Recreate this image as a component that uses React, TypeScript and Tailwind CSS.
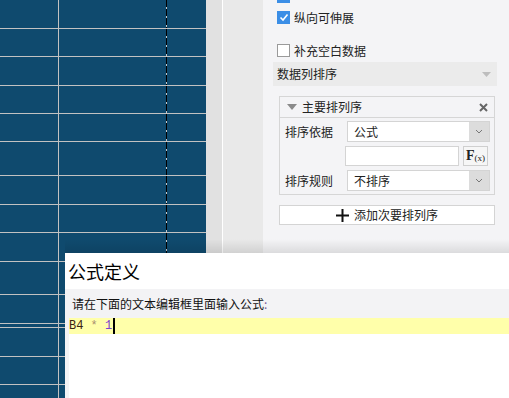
import React from 'react';

// grid row heights, each includes its 1px bottom line
const rowHeights = [29, 28, 29, 28, 28, 34, 29, 28, 29, 33, 29, 4, 29, 28, 28];

const cjk = { fontFamily: '"Noto Sans CJK SC", "Noto Sans", sans-serif' };

function Chevron() {
  return (
    <svg width="8" height="5" viewBox="0 0 8 5" fill="none">
      <path d="M1 1l3 3 3-3" stroke="#777" strokeWidth="1" />
    </svg>
  );
}

function Select({ value }: { value: string }) {
  return (
    <div className="flex h-[21px] w-[143px] border border-[#d4d4d4] bg-white">
      <div className="flex flex-1 items-center pl-[6px] text-[12px] leading-none text-[#222]">{value}</div>
      <div className="flex w-[20px] items-center justify-center bg-[#dcdcdc]">
        <Chevron />
      </div>
    </div>
  );
}

export default function App() {
  return (
    <div className="relative flex h-[398px] w-[509px] overflow-hidden bg-[#f4f4f6]" style={cjk}>
      {/* --- spreadsheet grid --- */}
      <div className="flex w-[206px] shrink-0 flex-col bg-[#0f4a6e]">
        {rowHeights.map((h, i) => (
          <div key={i} className="flex shrink-0 border-b border-[#c2c2c2] box-border" style={{ height: h }}>
            <div className="w-[58px]" />
            <div className="w-px bg-[#c2c2c2]" />
            <div className="w-[107px]" />
            <div className="w-px bg-[repeating-linear-gradient(to_bottom,#000_0px,#000_7px,#c8c8c8_7px,#c8c8c8_9px)]" />
            <div className="flex-1" />
          </div>
        ))}
      </div>
      <div className="w-[16px] shrink-0 bg-[#e1e1e1]" />
      <div className="w-px shrink-0 bg-white" />
      <div className="w-[40px] shrink-0 bg-[#e9e9e9]" />

      {/* --- property panel --- */}
      <div className="flex w-[246px] shrink-0 flex-col">
        <div className="h-[3px] pl-[14px]">
          <div className="h-[3px] w-[13px] bg-[#3b8ee6]" />
        </div>

        <div className="mt-[8px] flex h-[13px] items-center pl-[14px]">
          <div className="flex h-[13px] w-[13px] items-center justify-center bg-[#3b8ee6]">
            <svg width="10" height="9" viewBox="0 0 10 9" fill="none">
              <path d="M1.5 4.5l2.5 2.5 4.5-5.5" stroke="#fff" strokeWidth="1.6" />
            </svg>
          </div>
          <span className="ml-[4px] text-[12px] leading-none text-[#222]">纵向可伸展</span>
        </div>

        <div className="mt-[20px] flex h-[13px] items-center pl-[14px]">
          <div className="h-[13px] w-[13px] border border-[#9a9a9a] bg-white" />
          <span className="ml-[4px] text-[12px] leading-none text-[#222]">补充空白数据</span>
        </div>

        <div className="mt-[5px] ml-[10px] mr-[12px] flex h-[24px] items-center justify-between bg-[#ebebeb] pl-[4px] pr-[6px]">
          <span className="text-[12px] leading-none text-[#222]">数据列排序</span>
          <svg width="9" height="5" viewBox="0 0 9 5">
            <path d="M0 0h9L4.5 5z" fill="#bdbdbd" />
          </svg>
        </div>

        <div className="mt-[10px] ml-[16px] mr-[14px] flex flex-col border border-[#d6d6d6] pb-[3px]">
          <div className="flex h-[21px] items-center border-b border-[#d6d6d6] pl-[7px] pr-[6px]">
            <svg width="10" height="6" viewBox="0 0 10 6">
              <path d="M0 0h10L5 6z" fill="#8a8a8a" />
            </svg>
            <span className="ml-[5px] flex-1 text-[12px] leading-none text-[#222]">主要排列序</span>
            <svg width="9" height="9" viewBox="0 0 9 9">
              <path d="M1 1l7 7M8 1l-7 7" stroke="#666" strokeWidth="2" />
            </svg>
          </div>

          <div className="mt-[3px] flex items-center">
            <span className="w-[67px] pl-[5px] text-[12px] leading-none text-[#222]">排序依据</span>
            <Select value="公式" />
          </div>

          <div className="mt-[4px] flex items-center pl-[65px]">
            <div className="h-[20px] w-[114px] border border-[#d4d4d4] bg-white" />
            <div className="ml-[4px] flex h-[20px] w-[25px] items-end justify-center border border-[#cfcfcf] bg-[#f6f6f6] pb-[2px] text-[#222]" style={{ fontFamily: '"Liberation Serif", serif' }}>
              <span className="text-[14px] font-bold leading-none">F</span>
              <span className="text-[9px] leading-none">(x)</span>
            </div>
          </div>

          <div className="mt-[4px] flex items-center">
            <span className="w-[67px] pl-[5px] text-[12px] leading-none text-[#222]">排序规则</span>
            <Select value="不排序" />
          </div>
        </div>

        <div className="mt-[10px] ml-[16px] mr-[14px] flex h-[20px] items-center justify-center border border-[#d4d4d4] bg-white">
          <svg width="13" height="13" viewBox="0 0 13 13">
            <path d="M6.5 0v13M0 6.5h13" stroke="#111" strokeWidth="2" />
          </svg>
          <span className="ml-[5px] text-[12px] leading-none text-[#222]">添加次要排列序</span>
        </div>
      </div>

      {/* --- formula dialog (floats over the sheet) --- */}
      <div className="absolute left-[65px] top-[253px] right-0 bottom-0 flex flex-col bg-white">
        <div className="absolute -top-[23px] left-0 right-0 h-[23px] bg-[linear-gradient(to_bottom,rgba(0,0,0,0)_40%,rgba(0,0,0,0.1)_100%)]" />
        <div className="flex h-[36px] items-center pl-[3px] text-[18px] leading-none text-black">公式定义</div>
        <div className="flex flex-1 flex-col bg-[#f3f3f5]">
          <div className="flex h-[29px] items-center pl-[7px] text-[12px] leading-none text-[#111]">
            请在下面的文本编辑框里面输入公式<span className="text-[#7a5a9a]">:</span>
          </div>
          <div className="ml-[4px] flex-1 bg-white">
            <div className="flex h-[16px] items-center bg-[#ffffaa] text-[12px] leading-none" style={{ fontFamily: '"Liberation Mono", monospace' }}>
              <span className="text-[#3a2410]">B4</span>
              <span className="whitespace-pre text-[#a89070]"> * </span>
              <span className="text-[#7b3fd0]">1</span>
              <span className="ml-[1px] h-[16px] w-[2px] bg-black" />
            </div>
          </div>
        </div>
      </div>
    </div>
  );
}
